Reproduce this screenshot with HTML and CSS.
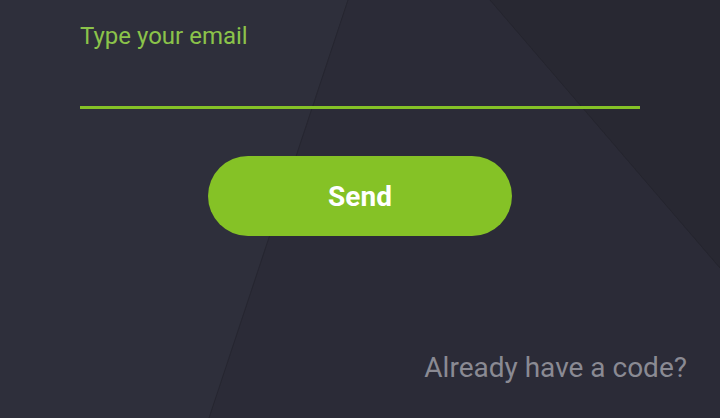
FILE: index.html
```html
<!DOCTYPE html>
<html>
<head>
<meta charset="utf-8">
<link rel="stylesheet" href="styles.css">
</head>
<body>
<div class="page">
  <svg class="bg" width="720" height="418" viewBox="0 0 720 418" aria-hidden="true">
    <rect x="0" y="0" width="720" height="418" fill="#2b2b37"/>
    <polygon points="0,0 348,0 209,418 0,418" fill="#2e2f3b"/>
    <polygon points="490,0 720,0 720,268" fill="#282832"/>
    <line x1="348" y1="0" x2="209" y2="418" stroke="#262630" stroke-width="1"/>
    <line x1="490" y1="0" x2="720" y2="268" stroke="#25252e" stroke-width="1"/>
  </svg>
  <main class="content">
    <label class="field">
      <span class="label">Type your email</span>
      <span class="input"></span>
    </label>
    <div class="actions">
      <button class="send">Send</button>
    </div>
    <div class="footer">
      <a class="code-link">Already have a code?</a>
    </div>
  </main>
</div>
</body>
</html>
```
FILE: styles.css
```css
html, body {
  margin: 0;
  padding: 0;
}
body {
  width: 720px;
  height: 418px;
  overflow: hidden;
  background: #2b2b37;
  font-family: Roboto, "Liberation Sans", sans-serif;
}
.page {
  position: relative;
  width: 720px;
  height: 418px;
}
.bg {
  position: absolute;
  left: 0;
  top: 0;
  z-index: 0;
}
.content {
  position: relative;
  z-index: 1;
  display: flex;
  flex-direction: column;
  padding: 22px 80px 0 80px;
  height: 418px;
  box-sizing: border-box;
}
.field {
  display: flex;
  flex-direction: column;
}
.label {
  color: #8bc34a;
  font-size: 24px;
  line-height: 28px;
}
.input {
  display: block;
  height: 56px;
  border-bottom: 3px solid #85c226;
}
.actions {
  display: flex;
  justify-content: center;
  margin-top: 47px;
}
.send {
  width: 304px;
  height: 80px;
  border: none;
  border-radius: 40px;
  background: #85c226;
  color: #ffffff;
  font-family: Roboto, "Liberation Sans", sans-serif;
  font-weight: 700;
  font-size: 28px;
  padding: 0;
}
.footer {
  display: flex;
  justify-content: flex-end;
  margin-top: 117px;
  margin-right: -47px;
}
.code-link {
  color: #8a8a93;
  font-size: 28px;
  line-height: 30px;
}
```
